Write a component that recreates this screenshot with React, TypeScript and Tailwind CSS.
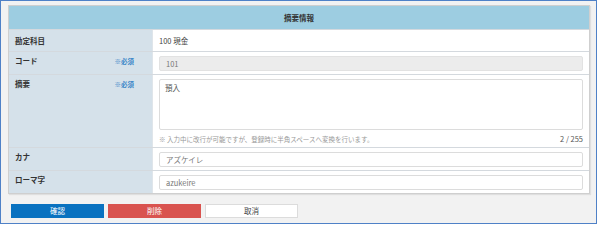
const font = { fontFamily: '"Noto Sans CJK JP", "Noto Sans", sans-serif' };

function Label({ text, required }: { text: string; required?: boolean }) {
  return (
    <div className="flex items-start justify-between border-r border-[#dfe5ea] bg-[#d5e1ea] pl-[6px] pr-[18px] pt-[3px]">
      <span className="text-[7.5px] leading-[12px] font-bold text-[#333]">{text}</span>
      {required && <span className="text-[6.5px] leading-[12px] font-bold text-[#3a86c8]">※必須</span>}
    </div>
  );
}

export default function App() {
  return (
    <div style={font} className="h-[224px] w-[597px] border border-[#4f81c7] bg-[#f2f2f2] pl-[7px] pt-[4px]">
      {/* 摘要情報テーブル */}
      <div className="w-[582px] border border-[#cfcfcf] bg-white shadow-[1px_1px_1px_rgba(0,0,0,0.08)]">
        <div className="flex h-[23px] items-center justify-center bg-[#9dcde1] text-[7.5px] font-bold text-[#333]">
          摘要情報
        </div>

        <div className="grid grid-cols-[144px_1fr] [&>*]:border-t [&>*]:border-[#d4d9de]">
          {/* 勘定科目 */}
          <div className="h-[22px] flex">
            <div className="flex-1 flex items-center bg-[#d5e1ea] pl-[6px] border-r border-[#dfe5ea]">
              <span className="text-[7.5px] font-bold text-[#333]">勘定科目</span>
            </div>
          </div>
          <div className="flex h-[22px] items-center pl-[6px] text-[7.5px] text-[#444]">100 現金</div>

          {/* コード */}
          <div className="h-[23px] grid"><Label text="コード" required /></div>
          <div className="h-[23px] px-[6px] pt-[4px]">
            <div className="flex h-[15px] items-center rounded-[2px] border border-[#e2e2e2] bg-[#ececec] pl-[6px] text-[7.5px] text-[#777]">
              101
            </div>
          </div>

          {/* 摘要 */}
          <div className="h-[73px] grid"><Label text="摘要" required /></div>
          <div className="h-[73px] px-[6px] pt-[4px]">
            <div className="h-[51px] rounded-[2px] border border-[#dcdcdc] bg-white pl-[5px] pt-[2px] text-[7.5px] text-[#555]">
              預入
            </div>
            <div className="mt-[3px] flex items-center justify-between text-[6.5px] leading-[12px] text-[#999]">
              <span>※ 入力中に改行が可能ですが、登録時に半角スペースへ変換を行います。</span>
              <span className="text-[7.5px] text-[#555]">2 / 255</span>
            </div>
          </div>

          {/* カナ */}
          <div className="h-[23px] grid"><Label text="カナ" /></div>
          <div className="h-[23px] px-[6px] pt-[4px]">
            <div className="flex h-[15px] items-center rounded-[2px] border border-[#dcdcdc] bg-white pl-[6px] text-[7.5px] text-[#777]">
              アズケイレ
            </div>
          </div>

          {/* ローマ字 */}
          <div className="h-[23px] grid"><Label text="ローマ字" /></div>
          <div className="h-[23px] px-[6px] pt-[4px]">
            <div className="flex h-[15px] items-center rounded-[2px] border border-[#dcdcdc] bg-white pl-[6px] text-[7.5px] text-[#777]">
              azukeire
            </div>
          </div>
        </div>
      </div>

      {/* ボタン */}
      <div className="mt-[10px] ml-[3px] flex gap-[4px] text-[7.5px]">
        <button className="h-[14px] w-[93px] bg-[#0a72c0] text-white">確認</button>
        <button className="h-[14px] w-[93px] bg-[#d9534f] text-white">削除</button>
        <button className="h-[14px] w-[93px] border border-[#dcdcdc] bg-white text-[#444]">取消</button>
      </div>
    </div>
  );
}
